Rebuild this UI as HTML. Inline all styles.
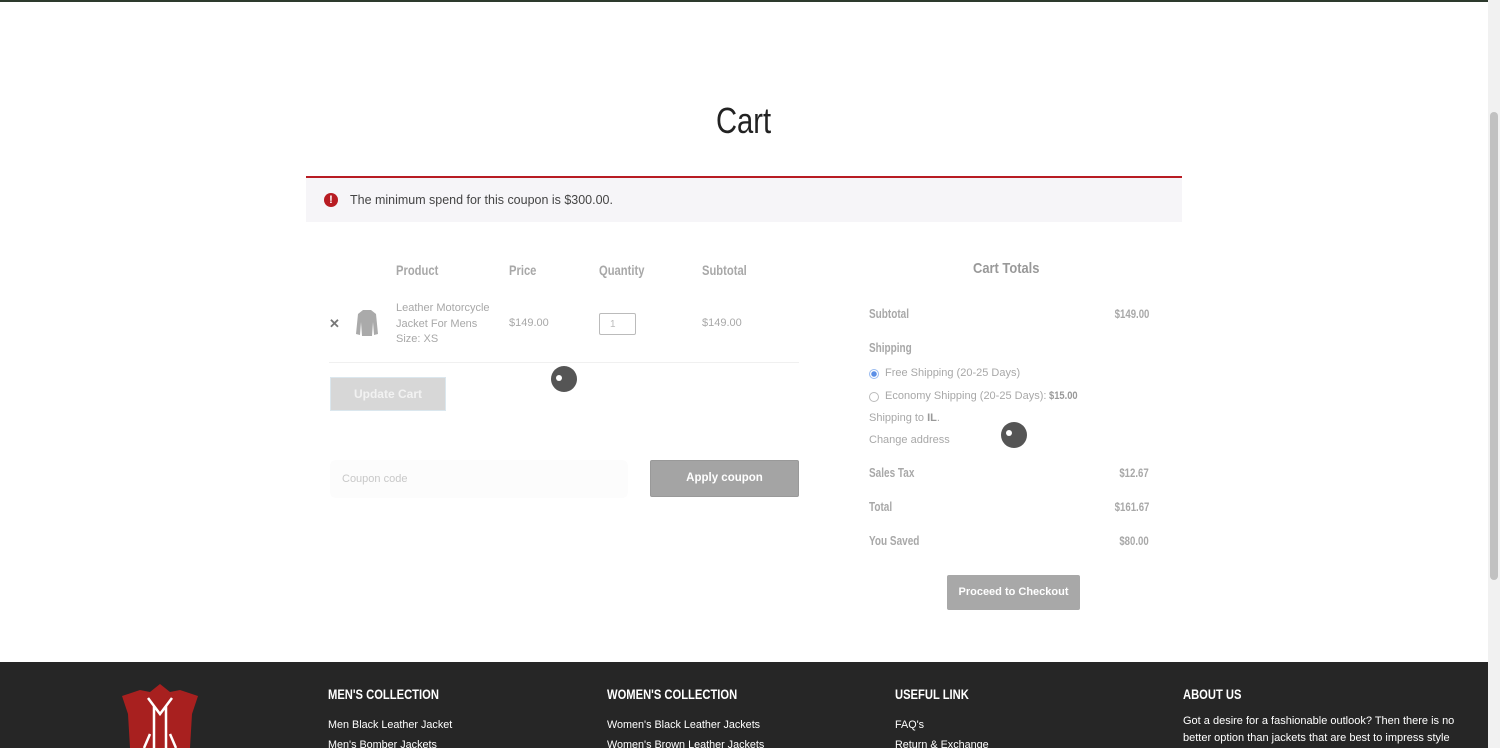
<!DOCTYPE html>
<html><head><meta charset="utf-8"><style>
*{margin:0;padding:0;box-sizing:border-box}
body{width:1500px;height:748px;overflow:hidden;background:#fff;font-family:"Liberation Sans",sans-serif;position:relative}
.n{font-weight:bold;transform:scaleX(.8);transform-origin:left}
.r{transform-origin:right}
.a{position:absolute;white-space:nowrap}
.g{color:#a8a8a8}
</style></head><body>
<div class="a" style="left:0;top:0;width:1488px;height:2px;background:#2d3a2d"></div>
<div class="a" style="left:1488px;top:0;width:12px;height:748px;background:#f1f1f1"></div>
<div class="a" style="left:1490px;top:112px;width:8px;height:468px;background:#c1c1c1;border-radius:4px"></div>

<div class="a" style="left:716px;top:100px;font-size:36px;color:#222;transform:scaleX(.81);transform-origin:left">Cart</div>

<div class="a" style="left:306px;top:176px;width:876px;height:46px;background:#f6f5f8;border-top:2px solid #b81c23"></div>
<div class="a" style="left:324px;top:193px;width:14px;height:14px;border-radius:50%;background:#b81c23;color:#fff;font-size:11px;font-weight:bold;text-align:center;line-height:14px">!</div>
<div class="a" style="left:350px;top:192px;font-size:13px;color:#444;transform:scaleX(.96);transform-origin:left">The minimum spend for this coupon is $300.00.</div>

<div class="a n g" style="left:396px;top:262px;font-size:14px">Product</div>
<div class="a n g" style="left:509px;top:262px;font-size:14px">Price</div>
<div class="a n g" style="left:599px;top:262px;font-size:14px">Quantity</div>
<div class="a n g" style="left:702px;top:262px;font-size:14px">Subtotal</div>

<div class="a" style="left:329px;top:316px;font-size:13px;color:#777;font-weight:bold">✕</div>
<svg class="a" style="left:354px;top:308px" width="26" height="30" viewBox="0 0 26 30"><path d="M9 2 L17 2 L22 6 L24 26 L20 27 L19 14 L18 28 L8 28 L7 14 L6 27 L2 26 L4 6Z" fill="#aaa"/></svg>
<div class="a g" style="left:396px;top:301px;font-size:11px;line-height:15.5px">Leather Motorcycle<br>Jacket For Mens<br>Size: XS</div>
<div class="a g" style="left:509px;top:317px;font-size:11px">$149.00</div>
<div class="a" style="left:599px;top:313px;width:37px;height:22px;border:1px solid #bbb;border-radius:2px;font-size:10px;color:#bbb;padding:5px 10px">1</div>
<div class="a g" style="left:702px;top:317px;font-size:11px">$149.00</div>
<div class="a" style="left:329px;top:362px;width:470px;height:1px;background:#f0f0f0"></div>

<div class="a" style="left:330px;top:377px;width:116px;height:34px;background:#d7d7d7;border:1px solid #dbe7ee;color:#f2f2f2;font-size:12px;font-weight:bold;text-align:center;line-height:32px">Update Cart</div>
<div class="a" style="left:551px;top:366px;width:26px;height:26px;border-radius:50%;background:#555"></div>
<div class="a" style="left:556px;top:375px;width:6px;height:6px;border-radius:50%;background:#fff"></div>

<div class="a" style="left:330px;top:460px;width:298px;height:38px;background:#fcfcfc;border-radius:6px;font-size:11px;color:#c8c8c8;padding:13px 12px">Coupon code</div>
<div class="a" style="left:650px;top:460px;width:149px;height:37px;background:#a4a4a4;border:1px solid #999;border-radius:2px;color:#fff;font-size:11.5px;font-weight:bold;text-align:center;line-height:35px">Apply coupon</div>

<div class="a n" style="left:973px;top:260px;font-size:15px;color:#999;transform:scaleX(.86)">Cart Totals</div>
<div class="a n g" style="left:869px;top:307px;font-size:12.5px">Subtotal</div>
<div class="a n g r" style="right:351px;top:307px;font-size:12px">$149.00</div>
<div class="a n g" style="left:869px;top:341px;font-size:12.5px">Shipping</div>
<div class="a" style="left:869px;top:369px;width:10px;height:10px;border-radius:50%;border:1px solid #9bbcf0;background:radial-gradient(#5b8fe6 0 2.5px,#fff 3px)"></div>
<div class="a g" style="left:885px;top:367px;font-size:11px">Free Shipping (20-25 Days)</div>
<div class="a" style="left:869px;top:392px;width:10px;height:10px;border-radius:50%;border:1px solid #bbb"></div>
<div class="a g" style="left:885px;top:390px;font-size:11px">Economy Shipping (20-25 Days): <b style="color:#999;display:inline-block;transform:scaleX(.85);transform-origin:left">$15.00</b></div>
<div class="a g" style="left:869px;top:412px;font-size:11px">Shipping to <b style="color:#999">IL</b>.</div>
<div class="a g" style="left:869px;top:434px;font-size:11px">Change address</div>
<div class="a" style="left:1001px;top:422px;width:26px;height:26px;border-radius:50%;background:#555"></div>
<div class="a" style="left:1006px;top:430px;width:6px;height:6px;border-radius:50%;background:#fff"></div>
<div class="a n g" style="left:869px;top:466px;font-size:12.5px">Sales Tax</div>
<div class="a n g r" style="right:351px;top:466px;font-size:12px">$12.67</div>
<div class="a n g" style="left:869px;top:500px;font-size:12.5px">Total</div>
<div class="a n g r" style="right:351px;top:500px;font-size:12px">$161.67</div>
<div class="a n g" style="left:869px;top:534px;font-size:12.5px">You Saved</div>
<div class="a n g r" style="right:351px;top:534px;font-size:12px">$80.00</div>
<div class="a" style="left:947px;top:575px;width:133px;height:35px;background:#a8a8a8;border-radius:2px;color:#fff;font-size:11px;font-weight:bold;text-align:center;line-height:35px">Proceed to Checkout</div>

<div class="a" style="left:0;top:662px;width:1488px;height:86px;background:#262626"></div>
<svg class="a" style="left:120px;top:684px" width="80" height="64" viewBox="0 0 80 64"><path d="M40 0 L50 8 L60 6 L78 12 L72 30 L70 64 L10 64 L8 30 L2 12 L20 6 L30 8Z" fill="#a8201f"/><path d="M28 14 L40 30 L52 14 M34 22 L34 64 M46 22 L46 64 M30 50 L24 64 M50 50 L56 64" stroke="#fff" stroke-width="2.5" fill="none"/></svg>
<div class="a n" style="left:328px;top:686px;font-size:14px;color:#fff">MEN'S COLLECTION</div>
<div class="a n" style="left:607px;top:686px;font-size:14px;color:#fff">WOMEN'S COLLECTION</div>
<div class="a n" style="left:895px;top:686px;font-size:14px;color:#fff">USEFUL LINK</div>
<div class="a n" style="left:1183px;top:686px;font-size:14px;color:#fff">ABOUT US</div>
<div class="a" style="left:328px;top:715px;font-size:10.8px;color:#fff;line-height:20px">Men Black Leather Jacket<br>Men's Bomber Jackets</div>
<div class="a" style="left:607px;top:715px;font-size:10.8px;color:#fff;line-height:20px">Women's Black Leather Jackets<br>Women's Brown Leather Jackets</div>
<div class="a" style="left:895px;top:715px;font-size:10.8px;color:#fff;line-height:20px">FAQ's<br>Return &amp; Exchange</div>
<div class="a" style="left:1183px;top:713px;font-size:11px;color:#fff;line-height:17px">Got a desire for a fashionable outlook? Then there is no<br>better option than jackets that are best to impress style</div>
</body></html>
